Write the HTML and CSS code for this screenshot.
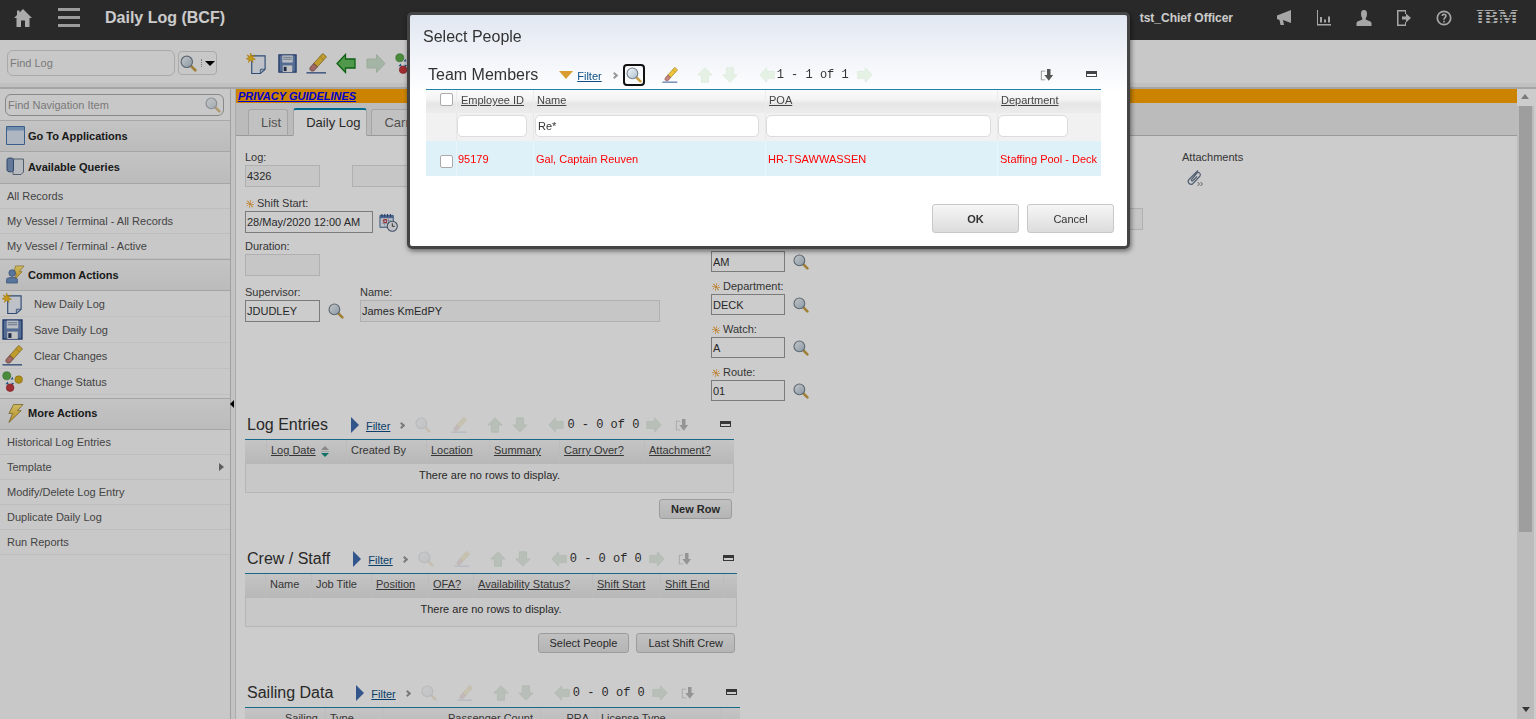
FILE: index.html
```html
<!DOCTYPE html>
<html lang="en">
<head>
    <meta charset="UTF-8">
    <meta name="viewport" content="width=device-width, initial-scale=1.0">
    <title>Daily Log (BCF)</title>
    <link rel="stylesheet" href="styles.css">
</head>
<body>
    <!-- Shared icons -->
    <svg class="icon-defs" xmlns="http://www.w3.org/2000/svg">
        <defs>
            <linearGradient id="glass" x1="0" y1="0" x2="1" y2="1">
                <stop offset="0" stop-color="#f4f8fb"/>
                <stop offset="1" stop-color="#aebfce"/>
            </linearGradient>
            <linearGradient id="bolt" x1="0" y1="0" x2="0" y2="1">
                <stop offset="0" stop-color="#ffe97a"/>
                <stop offset="1" stop-color="#e9b32c"/>
            </linearGradient>
        </defs>
        <symbol id="i-home" viewBox="0 0 18 18">
            <path d="M9 0 L18 9 H15.500 V18 H11 V11.500 H7 V18 H2.500 V9 H0 L3 6 V1.500 H5.500 V3.500 Z"/>
        </symbol>
        <symbol id="i-megaphone" viewBox="0 0 16 16">
            <path d="M15 0 V13 L7 10 L8 15 H4.500 L3.500 10 L1 9 V5.500 Z"/>
        </symbol>
        <symbol id="i-chart" viewBox="0 0 16 16">
            <path d="M1 0 H2 V14 H15 V15.500 H1 Z M4 7 H6 V12.500 H4 Z M8 9.500 H10 V12.500 H8 Z M12 6.500 H14 V12.500 H12 Z"/>
        </symbol>
        <symbol id="i-person" viewBox="0 0 16 16">
            <path d="M8 0 C10.500 0 11 2 11 4 C11 6 10 8 9.500 9 C10 10.500 15 10.500 15.500 13 V16 H0.500 V13 C1 10.500 6 10.500 6.500 9 C6 8 5 6 5 4 C5 2 5.500 0 8 0 Z"/>
        </symbol>
        <symbol id="i-logout" viewBox="0 0 16 16">
            <path d="M1 0 H10 V4 H9 V1.500 H2.500 V14.500 H9 V12 H10 V16 H1 Z M6 6.500 H10 V3.500 L15 8 L10 12.500 V9.500 H6 Z"/>
        </symbol>
        <symbol id="i-help" viewBox="0 0 16 16">
            <circle cx="8" cy="8" r="6.700" fill="none" stroke="currentColor" stroke-width="1.700"/>
            <path d="M5.500 6 C5.500 2.800 10.700 2.800 10.700 6 C10.700 8 8.700 8 8.700 9.800 H7.200 C7.200 7.300 9 7.300 9 6 C9 4.800 7.200 4.800 7.200 6 Z M7.200 10.800 H8.800 V12.400 H7.200 Z"/>
        </symbol>
        <symbol id="i-glass" viewBox="0 0 20 20">
            <line x1="12.500" y1="12.500" x2="18" y2="18" stroke="#c9a045" stroke-width="3.200" stroke-linecap="round"/>
            <circle cx="8" cy="8" r="6.700" fill="url(#glass)" stroke="#76838f" stroke-width="1.400"/>
        </symbol>
        <symbol id="i-new" viewBox="0 0 22 22">
            <path d="M6 3 H20 V17 L15 21.500 H6 Z" fill="#eef3fa" stroke="#3b5f92" stroke-width="1.200"/>
            <path d="M15 21.500 V17 H20 Z" fill="#b8c8dc" stroke="#3b5f92" stroke-width=".8"/>
            <path d="M5 0 L6 3.500 L9.500 2 L7 5 L10 6.500 L7 7 L7.500 10 L5 7.500 L2.500 10 L3 7 L0 6 L3 5 L1 2 L4 3.500 Z" fill="#f3c11c" stroke="#c88a10" stroke-width=".5"/>
        </symbol>
        <symbol id="i-save" viewBox="0 0 20 20">
            <path d="M1 1 H19 V19 H1 Z" fill="#6a86b8" stroke="#2b4a82" stroke-width="1.400"/>
            <path d="M4.500 1.500 H15.500 V9 H4.500 Z" fill="#e8edf4"/>
            <path d="M5.500 3.500 H14.500 M5.500 5.500 H14.500" stroke="#7f90a8"/>
            <path d="M5 12 H15 V19 H5 Z" fill="#f2f2f2"/>
            <path d="M6 13.500 H9 V18 H6 Z" fill="#26385c"/>
        </symbol>
        <symbol id="i-eraser" viewBox="0 0 22 22">
            <path d="M17.500 .5 L21.500 4 L12 14.500 L8 11 Z" fill="#eec53a" stroke="#8a6a18" stroke-width=".7"/>
            <path d="M14.500 3.500 L18.500 7.500" stroke="#b98f20" stroke-width=".8"/>
            <path d="M8 11 L12 14.500 L8.500 18.500 C5.500 20 3 17.500 4.500 15 Z" fill="#c8847c" stroke="#6b3a34" stroke-width=".7"/>
            <path d="M0.500 20.800 H21" stroke="#2d4f8a" stroke-width="1.300"/>
        </symbol>
        <symbol id="i-status" viewBox="0 0 22 22">
            <path d="M9 9 L11 6 L12 9 Z M10 12 L13 13 L10 15 Z M6 11 L3.500 14 L7 14 Z" fill="#2f6ea3"/>
            <circle cx="5" cy="5" r="4.200" fill="#5db04a" stroke="#3d7f30" stroke-width=".6"/>
            <circle cx="17.500" cy="9" r="4" fill="#d9b21c" stroke="#a07f10" stroke-width=".6"/>
            <circle cx="8.500" cy="17.500" r="4" fill="#c9393c" stroke="#8f2226" stroke-width=".6"/>
        </symbol>
        <symbol id="i-left" viewBox="0 0 20 20"><path d="M9.500 1 L1 10 L9.500 19 V14.500 H19 V5.500 H9.500 Z"/></symbol>
        <symbol id="i-right" viewBox="0 0 20 20"><path d="M10.500 1 L19 10 L10.500 19 V14.500 H1 V5.500 H10.500 Z"/></symbol>
        <symbol id="i-up" viewBox="0 0 20 20"><path d="M10 1 L19 10 H14.500 V19 H5.500 V10 H1 Z"/></symbol>
        <symbol id="i-down" viewBox="0 0 20 20"><path d="M10 19 L19 10 H14.500 V1 H5.500 V10 H1 Z"/></symbol>
        <symbol id="i-export" viewBox="0 0 16 16">
            <path d="M1 3 H6 V4 H2 V13 H6 V14 H1 Z" fill="#8a8a8a"/>
            <path d="M8 1 H12 V8 H15 L10 14.500 L5 8 H8 Z" fill="#555"/>
        </symbol>
        <symbol id="i-collapse" viewBox="0 0 11 6">
            <path d="M0 0 H11 V6 H0 Z M1 3 V5 H10 V3 Z" fill-rule="evenodd" fill="#444"/>
        </symbol>
        <symbol id="i-sort" viewBox="0 0 8 11">
            <path d="M4 0 L8 4 H0 Z" fill="#aaa"/>
            <path d="M0 5.500 H8 V6 H0 Z" fill="#aaa"/>
            <path d="M0 7 H8 L4 11 Z" fill="#0f8f7f"/>
        </symbol>
        <symbol id="i-clip" viewBox="0 0 18 18">
            <path d="M12 1.500 L3 10.500 C.5 13.500 4.500 17 7 14.500 L14 7 C15.500 5 12.500 2.300 11 4 L5.500 10.500 C5 11.500 6 12.500 7 11.500 L11 7.500" fill="none" stroke="#6a7a90" stroke-width="1.200"/>
            <path d="M11.500 13 L13.500 15 L11.500 17 M14.500 13 L16.500 15 L14.500 17" fill="none" stroke="#777"/>
        </symbol>
        <symbol id="i-calendar" viewBox="0 0 20 20">
            <path d="M1 2.500 H15 V15 H1 Z" fill="#eef2f8" stroke="#3b5f92"/>
            <path d="M1 2.500 H15 V5.500 H1 Z" fill="#5e7fb4"/>
            <path d="M3 1 V4 M6 1 V4 M9 1 V4 M12 1 V4" stroke="#2b4a82"/>
            <path d="M3 8 H13 M3 11 H13 M6 6 V14 M10 6 V14" stroke="#8ea4c6" stroke-width=".7"/>
            <rect x="5" y="7" width="3" height="3" fill="none" stroke="#c9393c"/>
            <circle cx="14" cy="14" r="5.300" fill="#f0f2f4" stroke="#4b5f7a" stroke-width="1.100"/>
            <path d="M14 10.800 V14 H16.500" fill="none" stroke="#333"/>
        </symbol>
        <symbol id="i-apps" viewBox="0 0 19 19">
            <path d="M.5 .5 H18.500 V18.500 H.5 Z" fill="#d9e4f2" stroke="#4a76ad"/>
            <path d="M1 1 H18 V4.500 H1 Z" fill="#8fb0d8"/>
        </symbol>
        <symbol id="i-queries" viewBox="0 0 19 19">
            <path d="M7 2 H17.500 V15 L15 17.500 H7 Z" fill="#e4e8ee" stroke="#69778c"/>
            <path d="M1 2.500 C1 .5 7.500 .5 7.500 2.500 V13 C7.500 15.500 1 15.500 1 13 Z" fill="#7c97bf" stroke="#3d5a88"/>
        </symbol>
        <symbol id="i-common" viewBox="0 0 20 20">
            <path d="M10 1 H19 L14 7 H17 L8.500 16 L11 9 H8 Z" fill="url(#bolt)" stroke="#a8842a" stroke-width=".7"/>
            <circle cx="6.500" cy="8.500" r="3.500" fill="#6f93c4" stroke="#3d5a88" stroke-width=".7"/>
            <path d="M.5 19 V15 C.5 12.500 12 12.500 12 15 V19 Z" fill="#6f93c4" stroke="#3d5a88" stroke-width=".7"/>
        </symbol>
        <symbol id="i-bolt" viewBox="0 0 18 20">
            <path d="M7 .5 H17 L11 7 H15 L2 19.500 L6 10 H2 Z" fill="url(#bolt)" stroke="#9a8240" stroke-width=".9"/>
        </symbol>
    </svg>

    <header class="topbar">
        <svg class="top-home"><use href="#i-home"/></svg>
        <div class="top-burger"><span></span><span></span><span></span></div>
        <div class="top-title">Daily Log (BCF)</div>
        <div class="top-user">tst_Chief Officer</div>
        <svg class="top-icon"><use href="#i-megaphone"/></svg>
        <svg class="top-icon"><use href="#i-chart"/></svg>
        <svg class="top-icon"><use href="#i-person"/></svg>
        <svg class="top-icon"><use href="#i-logout"/></svg>
        <svg class="top-icon"><use href="#i-help"/></svg>
        <div class="top-logo">IBM</div>
    </header>

    <div class="toolbar">
        <input class="find-log" type="text" placeholder="Find Log">
        <div class="find-btn">
            <svg class="find-glass"><use href="#i-glass"/></svg>
            <span class="find-dots"></span>
            <span class="find-caret"></span>
        </div>
        <svg class="tool tool-new"><use href="#i-new"/></svg>
        <svg class="tool tool-save"><use href="#i-save"/></svg>
        <svg class="tool tool-eraser"><use href="#i-eraser"/></svg>
        <svg class="tool tool-back arrow-on"><use href="#i-left"/></svg>
        <svg class="tool tool-next arrow-next"><use href="#i-right"/></svg>
        <svg class="tool tool-status"><use href="#i-status"/></svg>
    </div>

    <div class="workspace">
        <nav class="sidenav">
            <div class="nav-search">
                <input type="text" placeholder="Find Navigation Item">
                <svg class="nav-search-icon"><use href="#i-glass"/></svg>
            </div>
            <div class="nav-head"><svg class="nav-head-icon"><use href="#i-apps"/></svg>Go To Applications</div>
            <div class="nav-head nav-head-tall"><svg class="nav-head-icon"><use href="#i-queries"/></svg>Available Queries</div>
            <a class="nav-item">All Records</a>
            <a class="nav-item">My Vessel / Terminal - All Records</a>
            <a class="nav-item">My Vessel / Terminal - Active</a>
            <div class="nav-head nav-head-top"><svg class="nav-head-icon"><use href="#i-common"/></svg>Common Actions</div>
            <a class="nav-action"><svg><use href="#i-new"/></svg>New Daily Log</a>
            <a class="nav-action"><svg><use href="#i-save"/></svg>Save Daily Log</a>
            <a class="nav-action"><svg><use href="#i-eraser"/></svg>Clear Changes</a>
            <a class="nav-action"><svg><use href="#i-status"/></svg>Change Status</a>
            <div class="nav-head nav-head-top nav-head-more"><svg class="nav-head-icon"><use href="#i-bolt"/></svg>More Actions</div>
            <a class="nav-item">Historical Log Entries</a>
            <a class="nav-item nav-more">Template</a>
            <a class="nav-item">Modify/Delete Log Entry</a>
            <a class="nav-item">Duplicate Daily Log</a>
            <a class="nav-item">Run Reports</a>
        </nav>
        <div class="splitter"><span class="splitter-grip"></span></div>

        <main class="main">
            <div class="notice"><a href="#">PRIVACY GUIDELINES</a></div>
            <div class="tabs">
                <div class="tab tab-list">List</div>
                <div class="tab tab-active">Daily Log</div>
                <div class="tab">Carry Over</div>
            </div>

            <div class="form">
                <div class="form-left">
                    <div class="field-row">
                        <div class="field">
                            <label>Log:</label>
                            <input class="inp w75 readonly" type="text" value="4326" readonly>
                        </div>
                        <div class="field field-desc">
                            <label>&nbsp;</label>
                            <input class="inp w300 readonly" type="text" readonly>
                        </div>
                    </div>
                    <div class="field gap-lg">
                        <label><span class="req"></span>Shift Start:</label>
                        <div class="inp-wrap">
                            <input class="inp w128" type="text" value="28/May/2020 12:00 AM">
                            <svg class="cal"><use href="#i-calendar"/></svg>
                        </div>
                    </div>
                    <div class="field gap-sm">
                        <label>Duration:</label>
                        <input class="inp w75 readonly" type="text" readonly>
                    </div>
                    <div class="field-row gap-lg">
                        <div class="field">
                            <label>Supervisor:</label>
                            <div class="inp-wrap">
                                <input class="inp w75" type="text" value="JDUDLEY">
                                <svg class="lookup"><use href="#i-glass"/></svg>
                            </div>
                        </div>
                        <div class="field field-name">
                            <label>Name:</label>
                            <input class="inp w300 readonly" type="text" value="James KmEdPY" readonly>
                        </div>
                    </div>
                </div>

                <div class="form-mid">
                    <input class="inp w104 readonly mid-extra" type="text" readonly>
                    <div class="field mid-first">
                        <label><span class="req"></span>Shift:</label>
                        <div class="inp-wrap">
                            <input class="inp w74" type="text" value="AM">
                            <svg class="lookup"><use href="#i-glass"/></svg>
                        </div>
                    </div>
                    <div class="field gap-sm">
                        <label><span class="req"></span>Department:</label>
                        <div class="inp-wrap">
                            <input class="inp w74" type="text" value="DECK">
                            <svg class="lookup"><use href="#i-glass"/></svg>
                        </div>
                    </div>
                    <div class="field gap-sm">
                        <label><span class="req"></span>Watch:</label>
                        <div class="inp-wrap">
                            <input class="inp w74" type="text" value="A">
                            <svg class="lookup"><use href="#i-glass"/></svg>
                        </div>
                    </div>
                    <div class="field gap-sm">
                        <label><span class="req"></span>Route:</label>
                        <div class="inp-wrap">
                            <input class="inp w74" type="text" value="01">
                            <svg class="lookup"><use href="#i-glass"/></svg>
                        </div>
                    </div>
                </div>

                <div class="form-right">
                    <label>Attachments</label>
                    <svg class="clip"><use href="#i-clip"/></svg>
                </div>
            </div>

            <section class="panel panel-log">
                <div class="panel-bar">
                    <h2 class="panel-title">Log Entries</h2>
                    <span class="tri-right"></span>
                    <a class="filter-link" href="#">Filter</a>
                    <span class="chev"></span>
                    <svg class="pi pi-search faded"><use href="#i-glass"/></svg>
                    <svg class="pi pi-eraser faded"><use href="#i-eraser"/></svg>
                    <svg class="pi pi-up arrow-off"><use href="#i-up"/></svg>
                    <svg class="pi pi-down arrow-off"><use href="#i-down"/></svg>
                    <svg class="pi pi-left arrow-off"><use href="#i-left"/></svg>
                    <span class="pager">0 - 0 of 0</span>
                    <svg class="pi pi-right arrow-off"><use href="#i-right"/></svg>
                    <svg class="pi pi-export faded-mid"><use href="#i-export"/></svg>
                    <svg class="pi-collapse"><use href="#i-collapse"/></svg>
                </div>
                <div class="grid-head cols-log">
                    <div></div>
                    <div class="cell"><u>Log Date</u><svg class="sorter"><use href="#i-sort"/></svg></div>
                    <div class="cell">Created By</div>
                    <div class="cell"><u>Location</u></div>
                    <div class="cell"><u>Summary</u></div>
                    <div class="cell"><u>Carry Over?</u></div>
                    <div class="cell"><u>Attachment?</u></div>
                </div>
                <div class="no-rows">There are no rows to display.</div>
                <div class="panel-btns"><button class="btn btn-strong">New Row</button></div>
            </section>

            <section class="panel panel-crew">
                <div class="panel-bar">
                    <h2 class="panel-title">Crew / Staff</h2>
                    <span class="tri-right"></span>
                    <a class="filter-link" href="#">Filter</a>
                    <span class="chev"></span>
                    <svg class="pi pi-search faded"><use href="#i-glass"/></svg>
                    <svg class="pi pi-eraser faded"><use href="#i-eraser"/></svg>
                    <svg class="pi pi-up arrow-off"><use href="#i-up"/></svg>
                    <svg class="pi pi-down arrow-off"><use href="#i-down"/></svg>
                    <svg class="pi pi-left arrow-off"><use href="#i-left"/></svg>
                    <span class="pager">0 - 0 of 0</span>
                    <svg class="pi pi-right arrow-off"><use href="#i-right"/></svg>
                    <svg class="pi pi-export faded-mid"><use href="#i-export"/></svg>
                    <svg class="pi-collapse"><use href="#i-collapse"/></svg>
                </div>
                <div class="grid-head cols-crew">
                    <div></div>
                    <div class="cell">Name</div>
                    <div class="cell">Job Title</div>
                    <div class="cell"><u>Position</u></div>
                    <div class="cell"><u>OFA?</u></div>
                    <div class="cell"><u>Availability Status?</u></div>
                    <div class="cell"><u>Shift Start</u></div>
                    <div class="cell"><u>Shift End</u></div>
                    <div></div>
                </div>
                <div class="no-rows">There are no rows to display.</div>
                <div class="panel-btns">
                    <button class="btn">Select People</button>
                    <button class="btn">Last Shift Crew</button>
                </div>
            </section>

            <section class="panel panel-sail">
                <div class="panel-bar">
                    <h2 class="panel-title">Sailing Data</h2>
                    <span class="tri-right"></span>
                    <a class="filter-link" href="#">Filter</a>
                    <span class="chev"></span>
                    <svg class="pi pi-search faded"><use href="#i-glass"/></svg>
                    <svg class="pi pi-eraser faded"><use href="#i-eraser"/></svg>
                    <svg class="pi pi-up arrow-off"><use href="#i-up"/></svg>
                    <svg class="pi pi-down arrow-off"><use href="#i-down"/></svg>
                    <svg class="pi pi-left arrow-off"><use href="#i-left"/></svg>
                    <span class="pager">0 - 0 of 0</span>
                    <svg class="pi pi-right arrow-off"><use href="#i-right"/></svg>
                    <svg class="pi pi-export faded-mid"><use href="#i-export"/></svg>
                    <svg class="pi-collapse"><use href="#i-collapse"/></svg>
                </div>
                <div class="grid-head cols-sail">
                    <div class="cell cell-end">Sailing</div>
                    <div class="cell">Type</div>
                    <div class="cell cell-end">Passenger Count</div>
                    <div class="cell cell-end">PRA</div>
                    <div class="cell">License Type</div>
                    <div></div>
                </div>
            </section>
        </main>

        <div class="scrollbar">
            <span class="scroll-up"></span>
            <div class="scroll-thumb"></div>
            <span class="scroll-down"></span>
        </div>
    </div>

    <!-- Dim layer and the modal dialog -->
    <div class="overlay"></div>
    <div class="dialog">
        <div class="dialog-title">Select People</div>
        <div class="dialog-body">
            <div class="panel-bar team-bar">
                <h2 class="panel-title">Team Members</h2>
                <span class="tri-down"></span>
                <a class="filter-link" href="#">Filter</a>
                <span class="chev"></span>
                <span class="focus-box"><svg class="pi"><use href="#i-glass"/></svg></span>
                <svg class="pi pi-eraser"><use href="#i-eraser"/></svg>
                <svg class="pi pi-up arrow-pale"><use href="#i-up"/></svg>
                <svg class="pi pi-down arrow-pale"><use href="#i-down"/></svg>
                <svg class="pi pi-left arrow-pale"><use href="#i-left"/></svg>
                <span class="pager">1 - 1 of 1</span>
                <svg class="pi pi-right arrow-pale"><use href="#i-right"/></svg>
                <svg class="pi team-export"><use href="#i-export"/></svg>
                <svg class="pi-collapse"><use href="#i-collapse"/></svg>
            </div>
            <div class="grid-head cols-team team-head">
                <div class="cell-check"><span class="check"></span></div>
                <div class="cell"><u>Employee ID</u></div>
                <div class="cell"><u>Name</u></div>
                <div class="cell"><u>POA</u></div>
                <div class="cell"><u>Department</u></div>
            </div>
            <div class="team-filter cols-team">
                <div></div>
                <div class="filter-cell"><input class="filter-inp fw70" type="text"></div>
                <div class="filter-cell"><input class="filter-inp fw224" type="text" value="Re*"></div>
                <div class="filter-cell"><input class="filter-inp fw225" type="text"></div>
                <div class="filter-cell"><input class="filter-inp fw70" type="text"></div>
            </div>
            <div class="team-row cols-team">
                <div class="cell-check"><span class="check"></span></div>
                <div class="data-cell">95179</div>
                <div class="data-cell">Gal, Captain Reuven</div>
                <div class="data-cell">HR-TSAWWASSEN</div>
                <div class="data-cell">Staffing Pool - Deck</div>
            </div>
        </div>
        <div class="dialog-btns">
            <button class="dlg-btn dlg-ok">OK</button>
            <button class="dlg-btn">Cancel</button>
        </div>
    </div>
</body>
</html>
```

FILE: styles.css
```css
* {
    box-sizing: border-box;
}
html, body {
    height: 100%;
}
body {
    margin: 0;
    display: flex;
    flex-direction: column;
    overflow: hidden;
    font-family: "Liberation Sans", Arial, sans-serif;
    font-size: 11px;
    color: #444;
    background: #fff;
}
.icon-defs {
    position: absolute;
    width: 0;
    height: 0;
}
input {
    font-family: inherit;
}

/* top bar */
.topbar {
    flex: none;
    height: 40px;
    display: flex;
    align-items: center;
    background: #343434;
    color: #fff;
}
.top-home {
    width: 18px;
    height: 18px;
    margin: -4px 0 0 14px;
    fill: #d6d6d6;
}
.top-burger {
    width: 22px;
    margin: -6px 0 0 26px;
    display: flex;
    flex-direction: column;
    gap: 5px;
}
.top-burger span {
    height: 3px;
    background: #c4c4c4;
}
.top-title {
    margin: -4px 0 0 25px;
    font-size: 16px;
    font-weight: bold;
}
.top-user {
    margin: -4px 43px 0 auto;
    font-size: 12px;
    font-weight: bold;
}
.top-icon {
    width: 16px;
    height: 16px;
    margin: -4px 24px 0 0;
    fill: #d0d0d0;
    color: #d0d0d0;
}
.top-logo {
    position: relative;
    width: 42px;
    margin: -6px 18px 0 0;
    font-family: "Liberation Serif", serif;
    font-size: 21px;
    font-weight: bold;
    line-height: 18px;
    color: #d4d4d4;
}
.top-logo::after {
    content: "";
    position: absolute;
    inset: 0;
    background: repeating-linear-gradient(#343434 0, #343434 1px, transparent 1px, transparent 3px);
}

/* tool bar */
.toolbar {
    flex: none;
    height: 49px;
    display: flex;
    align-items: flex-start;
    padding-top: 10px;
    background: linear-gradient(#fafafa 0, #fafafa 43px, #f0f0f0 43px, #f0f0f0 47px, #cfcfcf 47px);
}
.find-log {
    width: 168px;
    height: 26px;
    margin-left: 7px;
    padding: 0 2px;
    border: 1px solid #d4d4d4;
    border-radius: 6px;
    background: #fafafa;
    font-size: 11px;
}
.find-log::placeholder, .nav-search input::placeholder {
    color: #999;
    opacity: 1;
}
.find-btn {
    width: 39px;
    height: 24px;
    margin: 1px 0 0 3px;
    display: flex;
    align-items: center;
    border: 1px solid #d4d4d4;
    border-radius: 4px;
}
.find-glass {
    width: 17px;
    height: 17px;
    margin-left: 1px;
}
.find-dots {
    width: 1px;
    height: 8px;
    margin-left: 4px;
    border-left: 1px dotted #999;
}
.find-caret {
    margin-left: 3px;
    border-left: 5px solid transparent;
    border-right: 5px solid transparent;
    border-top: 5px solid #000;
}
.tool {
    width: 21px;
    height: 21px;
    margin-top: 3px;
    flex: none;
}
.tool-new {
    margin-left: 29px;
}
.tool-save {
    width: 19px;
    height: 19px;
    margin: 4px 0 0 11px;
}
.tool-eraser {
    margin-left: 9px;
}
.tool-back {
    width: 20px;
    margin-left: 9px;
}
.tool-next {
    width: 20px;
    margin-left: 10px;
}
.tool-status {
    margin-left: 9px;
}
.arrow-on {
    fill: #63bf5f;
    stroke: #157a1a;
    stroke-width: 1.300;
}
.arrow-next {
    fill: #cfe3cf;
    stroke: #c2d6c2;
    stroke-width: 1;
}
.arrow-off {
    fill: #e6efe6;
    stroke: #dde8dd;
    stroke-width: 1;
}
.arrow-pale {
    fill: #e6f1e6;
    stroke: #dcebdc;
    stroke-width: 1;
}
.faded {
    opacity: .18;
}
.faded-mid {
    opacity: .4;
}

/* layout */
.workspace {
    flex: 1;
    min-height: 0;
    display: flex;
}

/* left navigation */
.sidenav {
    flex: none;
    width: 230px;
    overflow: hidden;
    background: #fafafa;
    color: #555;
}
.nav-search {
    position: relative;
    height: 32px;
    padding: 5px 6px 0 5px;
    border-bottom: 1px solid #d2d2d2;
}
.nav-search input {
    width: 100%;
    height: 22px;
    padding: 0 2px;
    border: 1px solid #aaa;
    border-radius: 6px;
    background: #fafafa;
    font-size: 11px;
}
.nav-search-icon {
    position: absolute;
    top: 8px;
    right: 9px;
    width: 16px;
    height: 16px;
    opacity: .6;
}
.nav-head {
    height: 31px;
    display: flex;
    align-items: center;
    padding-left: 28px;
    position: relative;
    border-bottom: 1px solid #cfcfcf;
    background: linear-gradient(#f5f5f5, #ebebeb);
    font-weight: bold;
    color: #222;
}
.nav-head-tall {
    height: 32px;
    padding-bottom: 1px;
}
.nav-head-top {
    height: 32px;
    border-top: 1px solid #cfcfcf;
}
.nav-head-more {
    margin-top: 3px;
    padding-bottom: 2px;
}
.nav-head-icon {
    position: absolute;
    left: 6px;
    top: 5px;
    width: 19px;
    height: 19px;
}
.nav-item {
    display: flex;
    align-items: center;
    height: 25px;
    padding-left: 7px;
    border-bottom: 1px solid #eee;
}
.nav-more {
    position: relative;
}
.nav-more::after {
    content: "";
    position: absolute;
    right: 6px;
    top: 8px;
    border-top: 4px solid transparent;
    border-bottom: 4px solid transparent;
    border-left: 5px solid #777;
}
.nav-action {
    display: flex;
    align-items: center;
    height: 26px;
    padding-left: 34px;
    position: relative;
    border-bottom: 1px solid #f0f0f0;
}
.nav-action svg {
    position: absolute;
    left: 2px;
    top: 2px;
    width: 21px;
    height: 21px;
}
.splitter {
    flex: none;
    width: 6px;
    position: relative;
    border-left: 1px solid #c8c8c8;
    border-right: 1px solid #d8d8d8;
    background: #f4f4f4;
}
.splitter-grip {
    position: absolute;
    left: -1px;
    top: 311px;
    border-top: 4px solid transparent;
    border-bottom: 4px solid transparent;
    border-right: 4px solid #000;
}

/* main column */
.main {
    flex: 1;
    min-width: 0;
    overflow: hidden;
}
.notice {
    height: 14px;
    padding-left: 2px;
    background: #ffa500;
    line-height: 15px;
    font-weight: bold;
    font-style: italic;
}
.notice a {
    color: #0000ff;
}
.tabs {
    height: 33px;
    display: flex;
    align-items: flex-end;
    gap: 4px;
    padding-left: 12px;
    border-bottom: 1px solid #c0c0c0;
    background: #eaeaea;
    font-size: 13px;
}
.tab {
    height: 27px;
    margin-bottom: -1px;
    padding: 5px 6px 0 12px;
    border: 1px solid #cfcfcf;
    border-bottom-color: #c0c0c0;
    border-radius: 3px 3px 0 0;
    background: #f2f2f2;
    color: #666;
}
.tab-list {
    margin-right: 1px;
}
.tab-active {
    height: 28px;
    padding-top: 5px;
    border-top: 2px solid #0085b5;
    border-bottom-color: #fff;
    background: #fff;
    color: #333;
}

/* form */
.form {
    height: 277px;
    display: flex;
    padding: 15px 0 0 9px;
}
.form-left {
    flex: none;
    width: 466px;
}
.form-mid {
    flex: none;
    width: 471px;
}
.form-mid .inp {
    height: 21px;
}
.form-mid .mid-extra {
    height: 22px;
}
.form-mid .gap-sm {
    margin-top: 8px;
}
.form-right label {
    display: block;
    height: 14px;
    line-height: 12px;
}
.form-right {
    flex: none;
}
.field label {
    display: block;
    height: 14px;
    line-height: 12px;
}
.field-row {
    display: flex;
}
.field-desc {
    margin-left: 32px;
}
.field-name {
    margin-left: 16px;
}
.gap-lg {
    margin-top: 10px;
}
.gap-sm {
    margin-top: 7px;
}
.inp-wrap {
    display: flex;
    align-items: center;
}
.inp {
    height: 22px;
    padding: 0 1px;
    border: 1px solid #9a9a9a;
    background: #fff;
    font-size: 11px;
    color: #333;
    outline: none;
}
.readonly {
    border-color: #dcdcdc;
    background: #f8f8f8;
}
.w74 { width: 74px; }
.w75 { width: 75px; }
.w104 { width: 104px; }
.w128 { width: 128px; }
.w300 { width: 300px; }
.mid-extra {
    display: block;
    margin: 57px 0 0 328px;
}
.mid-first {
    margin-top: 7px;
}
.lookup {
    width: 16px;
    height: 16px;
    margin-left: 8px;
}
.cal {
    width: 19px;
    height: 19px;
    margin-left: 6px;
}
.req {
    display: inline-block;
    width: 8px;
    height: 8px;
    margin: 0 3px 0 1px;
    vertical-align: -1px;
    border-radius: 50%;
    background: radial-gradient(#eea23c 25%, transparent 30%), repeating-conic-gradient(#f3bc6c 0 16deg, transparent 16deg 45deg);
}
.clip {
    display: block;
    width: 18px;
    height: 18px;
    margin: 4px 0 0 4px;
}

/* table panels */
.panel {
    margin-left: 9px;
}
.panel-log { width: 489px; }
.panel-crew { width: 492px; }
.panel-sail { width: 495px; }
.panel-bar {
    height: 26px;
    display: flex;
    align-items: center;
    padding: 0 0 2px 2px;
}
.panel-title {
    margin: 0;
    font-size: 16px;
    font-weight: normal;
    color: #333;
}
.tri-right {
    margin-left: 23px;
    border-top: 8px solid transparent;
    border-bottom: 8px solid transparent;
    border-left: 8px solid #3f6cb0;
}
.filter-link {
    margin: 1px 0 0 7px;
    color: #0c4f85;
}
.chev {
    width: 5px;
    height: 5px;
    margin-left: 9px;
    border-top: 2px solid #999;
    border-right: 2px solid #999;
    transform: rotate(45deg);
}
.pi {
    flex: none;
    width: 16px;
    height: 16px;
}
.pi-search {
    margin-left: 11px;
}
.pi-eraser {
    margin-left: 20px;
}
.pi-up {
    margin-left: 20px;
}
.pi-down {
    margin-left: 9px;
}
.pi-left {
    margin-left: 20px;
}
.pi-right {
    margin-left: 7px;
}
.pi-export {
    width: 14px;
    height: 14px;
    margin-left: 13px;
}
.pi-collapse {
    flex: none;
    width: 11px;
    height: 6px;
    margin: -3px 3px 0 auto;
}
.pager {
    margin-left: 3px;
    font-family: "Liberation Mono", monospace;
    font-size: 12px;
    color: #333;
}
.grid-head {
    height: 25px;
    display: grid;
    border-top: 1px solid #1d82a5;
    background: linear-gradient(#f6f6f6, #e6e6e6);
    line-height: 20px;
    color: #444;
}
.grid-head > div {
    border-left: 1px solid #ececec;
}
.grid-head > div:first-child {
    border-left: none;
}
.cell {
    padding-left: 4px;
    white-space: nowrap;
}
.cell-end {
    text-align: right;
    padding-right: 7px;
}
.sorter {
    width: 8px;
    height: 11px;
    margin-left: 5px;
    vertical-align: -3px;
}
.cols-log { grid-template-columns: 21px 80px 80px 63px 70px 85px 90px; }
.cols-crew { grid-template-columns: 20px 46px 60px 57px 45px 119px 68px 63px 14px; }
.cols-sail { grid-template-columns: 80px 57px 158px 56px 125px 19px; }
.cols-team { display: grid; grid-template-columns: 30px 77px 232px 232px 104px; }
.no-rows {
    height: 29px;
    border: 1px solid #e4e4e4;
    border-top: none;
    background: #fafafa;
    text-align: center;
    line-height: 23px;
    color: #333;
}
.panel-btns {
    height: 54px;
    display: flex;
    justify-content: flex-end;
    align-items: flex-start;
    gap: 7px;
    padding: 6px 2px 0 0;
}
.btn {
    height: 20px;
    padding: 0 11px;
    border: 1px solid #c4c4c4;
    border-radius: 3px;
    background: linear-gradient(#f2f2f2, #e2e2e2);
    font-family: inherit;
    font-size: 11px;
    color: #333;
}
.btn-strong {
    font-weight: bold;
}

/* scrollbar */
.scrollbar {
    flex: none;
    width: 19px;
    position: relative;
    border-right: 2px solid #fff;
    background: linear-gradient(#fff 0, #fff 17px, #ececec 17px);
}
.scroll-up {
    position: absolute;
    top: 5px;
    left: 4px;
    border-left: 4px solid transparent;
    border-right: 4px solid transparent;
    border-bottom: 5px solid #999;
}
.scroll-down {
    position: absolute;
    bottom: 7px;
    left: 5px;
    border-left: 4px solid transparent;
    border-right: 4px solid transparent;
    border-top: 5px solid #444;
}
.scroll-thumb {
    width: 13px;
    height: 426px;
    margin: 17px 0 0 2px;
    background: #c6c6c6;
}

/* modal */
.overlay {
    position: fixed;
    inset: 0;
    background: rgba(0, 0, 0, .2);
}
.dialog {
    position: absolute;
    left: 407px;
    top: 12px;
    width: 723px;
    height: 237px;
    border: 3px solid #444;
    border-radius: 5px;
    background: linear-gradient(#e1e7f1 0, #fff 78px);
    box-shadow: 1px 2px 5px rgba(0, 0, 0, .5);
    color: #333;
}
.dialog-title {
    height: 41px;
    padding: 12px 0 0 13px;
    font-size: 16px;
    line-height: 20px;
}
.dialog-body {
    width: 675px;
    margin-left: 16px;
}
.team-bar {
    height: 33px;
    padding: 5px 0 0 2px;
}
.tri-down {
    margin-left: 21px;
    border-left: 7px solid transparent;
    border-right: 7px solid transparent;
    border-top: 8px solid #d99c2f;
}
.team-bar .filter-link {
    margin-left: 4px;
}
.team-bar .chev {
    margin-left: 10px;
}
.focus-box {
    flex: none;
    width: 22px;
    height: 22px;
    margin-left: 6px;
    padding: 1px;
    border: 2px solid #111;
    border-radius: 4px;
}
.focus-box .pi {
    display: block;
}
.team-bar .pi-eraser {
    margin-left: 17px;
}
.team-bar .pi-up {
    margin-left: 19px;
}
.team-bar .pi-left {
    margin-left: 21px;
}
.team-bar .pager {
    margin-left: 2px;
}
.team-bar .pi-right {
    margin-left: 8px;
}
.team-export {
    width: 14px;
    height: 14px;
    margin-left: auto;
}
.team-bar .pi-collapse {
    margin: -3px 4px 0 32px;
}
.team-head {
    height: 24px;
    background: linear-gradient(#fafafa 0, #f4f4f4 40%, #e6e6e6 60%, #ececec);
}
.team-head .cell {
    padding-left: 3px;
}
.team-head .cell:nth-child(2) {
    padding-left: 4px;
}
.cell-check {
    display: flex;
    justify-content: center;
    padding-left: 11px;
}
.check {
    width: 13px;
    height: 13px;
    margin-top: 3px;
    border: 1px solid #aaa;
    border-radius: 2px;
    background: #fff;
}
.team-filter {
    height: 28px;
    background: #f1f1f1;
}
.filter-cell {
    padding: 2px 0 0;
    border-left: 1px solid #e8e8e8;
}
.filter-inp {
    display: block;
    height: 22px;
    padding: 0 2px;
    border: 1px solid #dcdcdc;
    border-radius: 5px;
    background: #fff;
    font-size: 11px;
    color: #333;
    outline: none;
}
.fw70 { width: 70px; }
.fw224 { width: 224px; margin-left: 1px; }
.fw225 { width: 225px; }
.team-row {
    height: 35px;
    background: #def1f8;
    color: #f00;
}
.team-row .check {
    margin-top: 14px;
}
.data-cell {
    padding: 12px 0 0 2px;
    border-left: 1px solid #eaf6fa;
    white-space: nowrap;
}
.data-cell:nth-child(2) {
    padding-left: 1px;
}
.dialog-btns {
    display: flex;
    justify-content: flex-end;
    gap: 8px;
    margin: 28px 13px 0 0;
}
.dlg-btn {
    width: 87px;
    height: 29px;
    border: 1px solid #c8c8c8;
    border-radius: 3px;
    background: linear-gradient(#f6f6f6, #dcdcdc);
    font-family: inherit;
    font-size: 11px;
    color: #333;
}
.dlg-ok {
    font-weight: bold;
}
```
